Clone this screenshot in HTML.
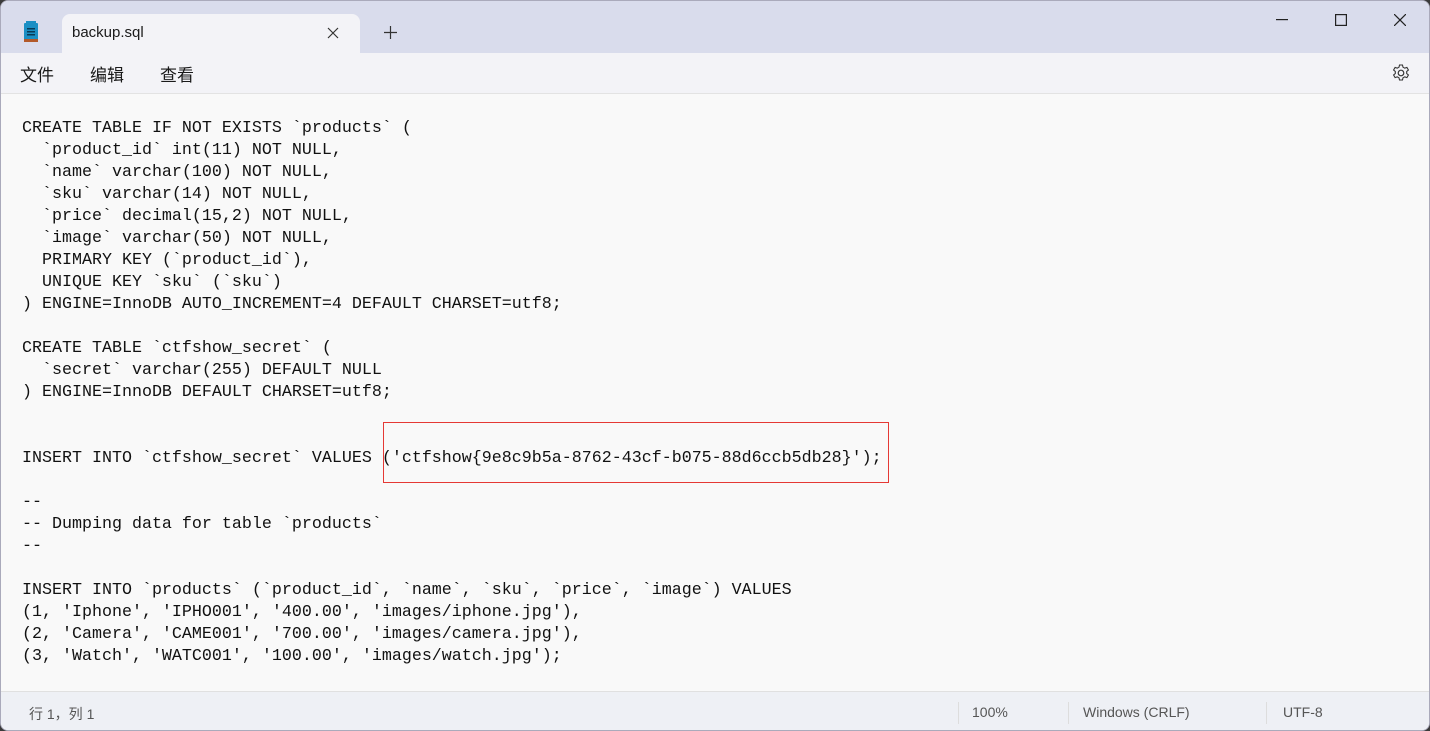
<!DOCTYPE html>
<html><head><meta charset="utf-8"><style>
body{margin:0;width:1430px;height:731px;overflow:hidden;background:#3a3a3a;font-family:"Liberation Sans","Noto Sans CJK SC",sans-serif;}
.win{position:absolute;left:0;top:0;width:1428px;height:729px;background:#f9f9f9;border:1px solid #aab;border-radius:8px;overflow:hidden;}
.title{position:absolute;left:0;top:0;right:0;height:52px;background:#d9dcec;}
.tab{position:absolute;left:61px;top:13px;width:298px;height:39px;background:#f3f3f7;border-radius:8px 8px 0 0;}
.tab span{position:absolute;left:10px;top:10px;font-size:15px;color:#1a1a1a;}
.menu{position:absolute;left:0;top:52px;right:0;height:40px;background:#f3f3f7;border-bottom:1px solid #e3e3e3;}
.menu span{position:absolute;top:8px;font-size:17px;color:#1a1a1a;}
pre{position:absolute;left:21px;top:117px;margin:0;font-family:"Liberation Mono",monospace;font-size:16.67px;line-height:22px;color:#111;}
.box{position:absolute;left:382px;top:421px;width:504px;height:59px;border:1px solid #e53935;}
.status{position:absolute;left:0;top:690px;right:0;height:39px;background:#eef0f5;border-top:1px solid #e0e0e0;font-size:14px;color:#555;}
.status span{position:absolute;top:12px;}
.sep{position:absolute;top:10px;width:1px;height:22px;background:#ddd;}
</style></head><body><div class="win">
<div class="title">
<svg style="position:absolute;left:22px;top:20px" width="16" height="22" viewBox="0 0 16 22"><rect x="1" y="2" width="14" height="17" rx="1" fill="#1b8fc4"/><rect x="1" y="18" width="14" height="3" fill="#b35a2a"/><rect x="4" y="7" width="8" height="1.5" fill="#083a55"/><rect x="4" y="10" width="8" height="1.5" fill="#083a55"/><rect x="4" y="13" width="8" height="1.5" fill="#083a55"/><rect x="3" y="0" width="10" height="2" fill="#1b8fc4"/></svg>
<div class="tab"><span>backup.sql</span>
<svg style="position:absolute;left:265px;top:13px" width="12" height="12" viewBox="0 0 12 12"><path d="M1 1L11 11M11 1L1 11" stroke="#333" stroke-width="1.2"/></svg></div>
<svg style="position:absolute;left:383px;top:25px" width="13" height="13" viewBox="0 0 13 13"><path d="M6.5 0V13M0 6.5H13" stroke="#333" stroke-width="1.2"/></svg>
<svg style="position:absolute;left:1275px;top:18px" width="12" height="2"><rect width="12" height="1.2" fill="#222"/></svg>
<svg style="position:absolute;left:1334px;top:13px" width="12" height="12"><rect x=".6" y=".6" width="10.8" height="10.8" fill="none" stroke="#222" stroke-width="1.2"/></svg>
<svg style="position:absolute;left:1393px;top:13px" width="12" height="12" viewBox="0 0 12 12"><path d="M0 0L12 12M12 0L0 12" stroke="#222" stroke-width="1.2"/></svg>
</div>
<div class="menu"><span style="left:19px">文件</span><span style="left:89px">编辑</span><span style="left:159px">查看</span>
<svg style="position:absolute;left:1390px;top:10px" width="20" height="20" viewBox="0 0 20 20"><circle cx="10" cy="10" r="2.8" fill="none" stroke="#333" stroke-width="1.2"/><path d="M8.5 2h3l.5 2.2 1.8 1 2.1-.8 1.5 2.6-1.7 1.5v2l1.7 1.5-1.5 2.6-2.1-.8-1.8 1-.5 2.2h-3l-.5-2.2-1.8-1-2.1.8-1.5-2.6 1.7-1.5v-2L2.6 7l1.5-2.6 2.1.8 1.8-1z" fill="none" stroke="#333" stroke-width="1.1"/></svg></div>
<pre>CREATE TABLE IF NOT EXISTS `products` (
  `product_id` int(11) NOT NULL,
  `name` varchar(100) NOT NULL,
  `sku` varchar(14) NOT NULL,
  `price` decimal(15,2) NOT NULL,
  `image` varchar(50) NOT NULL,
  PRIMARY KEY (`product_id`),
  UNIQUE KEY `sku` (`sku`)
) ENGINE=InnoDB AUTO_INCREMENT=4 DEFAULT CHARSET=utf8;

CREATE TABLE `ctfshow_secret` (
  `secret` varchar(255) DEFAULT NULL
) ENGINE=InnoDB DEFAULT CHARSET=utf8;


INSERT INTO `ctfshow_secret` VALUES ('ctfshow{9e8c9b5a-8762-43cf-b075-88d6ccb5db28}');

--
-- Dumping data for table `products`
--

INSERT INTO `products` (`product_id`, `name`, `sku`, `price`, `image`) VALUES
(1, 'Iphone', 'IPHO001', '400.00', 'images/iphone.jpg'),
(2, 'Camera', 'CAME001', '700.00', 'images/camera.jpg'),
(3, 'Watch', 'WATC001', '100.00', 'images/watch.jpg');</pre>
<div class="box"></div>
<div class="status"><span style="left:28px">行 1，列 1</span><div class="sep" style="left:957px"></div><span style="left:971px">100%</span><div class="sep" style="left:1067px"></div><span style="left:1082px">Windows (CRLF)</span><div class="sep" style="left:1265px"></div><span style="left:1282px">UTF-8</span></div>
</div></body></html>
